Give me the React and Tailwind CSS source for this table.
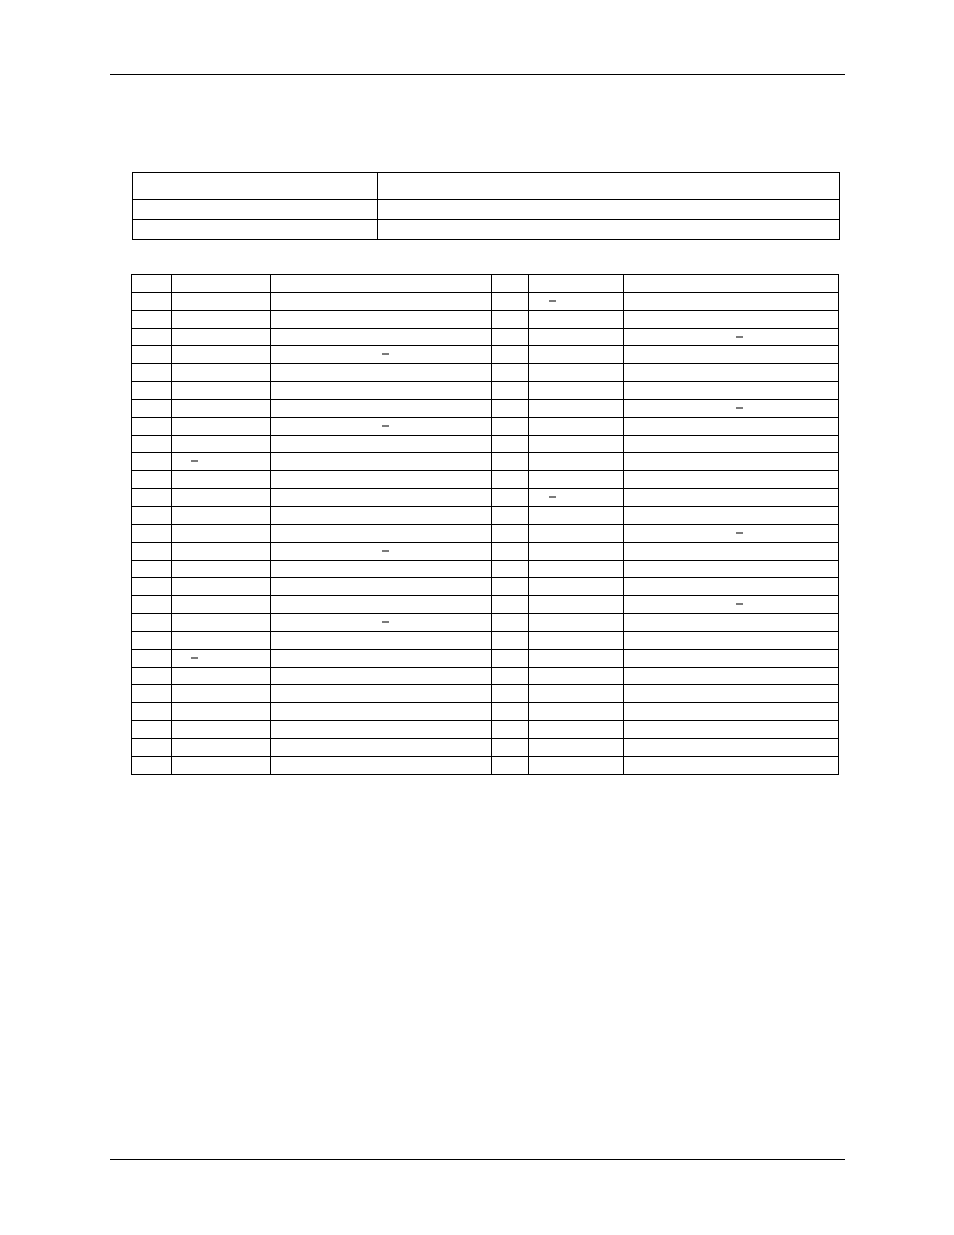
const cols = ['w-[39px]', 'w-[98px]', 'w-[220px]', 'w-[36px]', 'w-[94px]', 'w-[214px]'];

// row index -> column index that holds an overline mark, and its left offset
const marks = {
  1: [4, 'ml-[20px]'],
  3: [5, 'ml-[112px]'],
  4: [2, 'ml-[111px]'],
  7: [5, 'ml-[112px]'],
  8: [2, 'ml-[111px]'],
  10: [1, 'ml-[19px]'],
  12: [4, 'ml-[20px]'],
  14: [5, 'ml-[112px]'],
  15: [2, 'ml-[111px]'],
  18: [5, 'ml-[112px]'],
  19: [2, 'ml-[111px]'],
  21: [1, 'ml-[19px]'],
};

const Mark = ({ offset }) => (
  <span className={`block ${offset} mt-[7px] w-[7px] h-[2px] bg-[#7a7a7a]`}></span>
);

const PinTable = () => {
  const rows = Array.from({ length: 28 }, (_, i) => i);
  return (
    <div className="ml-[131px] mt-[34px] w-[708px] bg-black p-px flex flex-col gap-px">
      {rows.map(r => (
        <div key={r} className="flex gap-px h-[16.857px]">
          {cols.map((w, c) => (
            <div key={c} className={`${w} bg-white h-full`}>
              {marks[r] && marks[r][0] === c && <Mark offset={marks[r][1]} />}
            </div>
          ))}
        </div>
      ))}
    </div>
  );
};

const App = () => {
  return (
    <div className="w-[954px] min-h-[1235px] bg-white pt-[74px] flex flex-col" style={{ fontFamily: '"Liberation Sans", Arial, sans-serif' }}>
      <div className="ml-[110px] w-[735px] h-px bg-black"></div>

      <div className="ml-[132px] mt-[97px] w-[708px] bg-black p-px flex flex-col gap-px">
        <div className="flex gap-px h-[26px]">
          <div className="w-[244px] bg-white"></div>
          <div className="w-[461px] bg-white"></div>
        </div>
        <div className="flex gap-px h-[19px]">
          <div className="w-[244px] bg-white"></div>
          <div className="w-[461px] bg-white"></div>
        </div>
        <div className="flex gap-px h-[19px]">
          <div className="w-[244px] bg-white"></div>
          <div className="w-[461px] bg-white"></div>
        </div>
      </div>

      <PinTable />

      <div className="ml-[110px] mt-[384px] w-[735px] h-px bg-black"></div>
    </div>
  );
};

export default App;
